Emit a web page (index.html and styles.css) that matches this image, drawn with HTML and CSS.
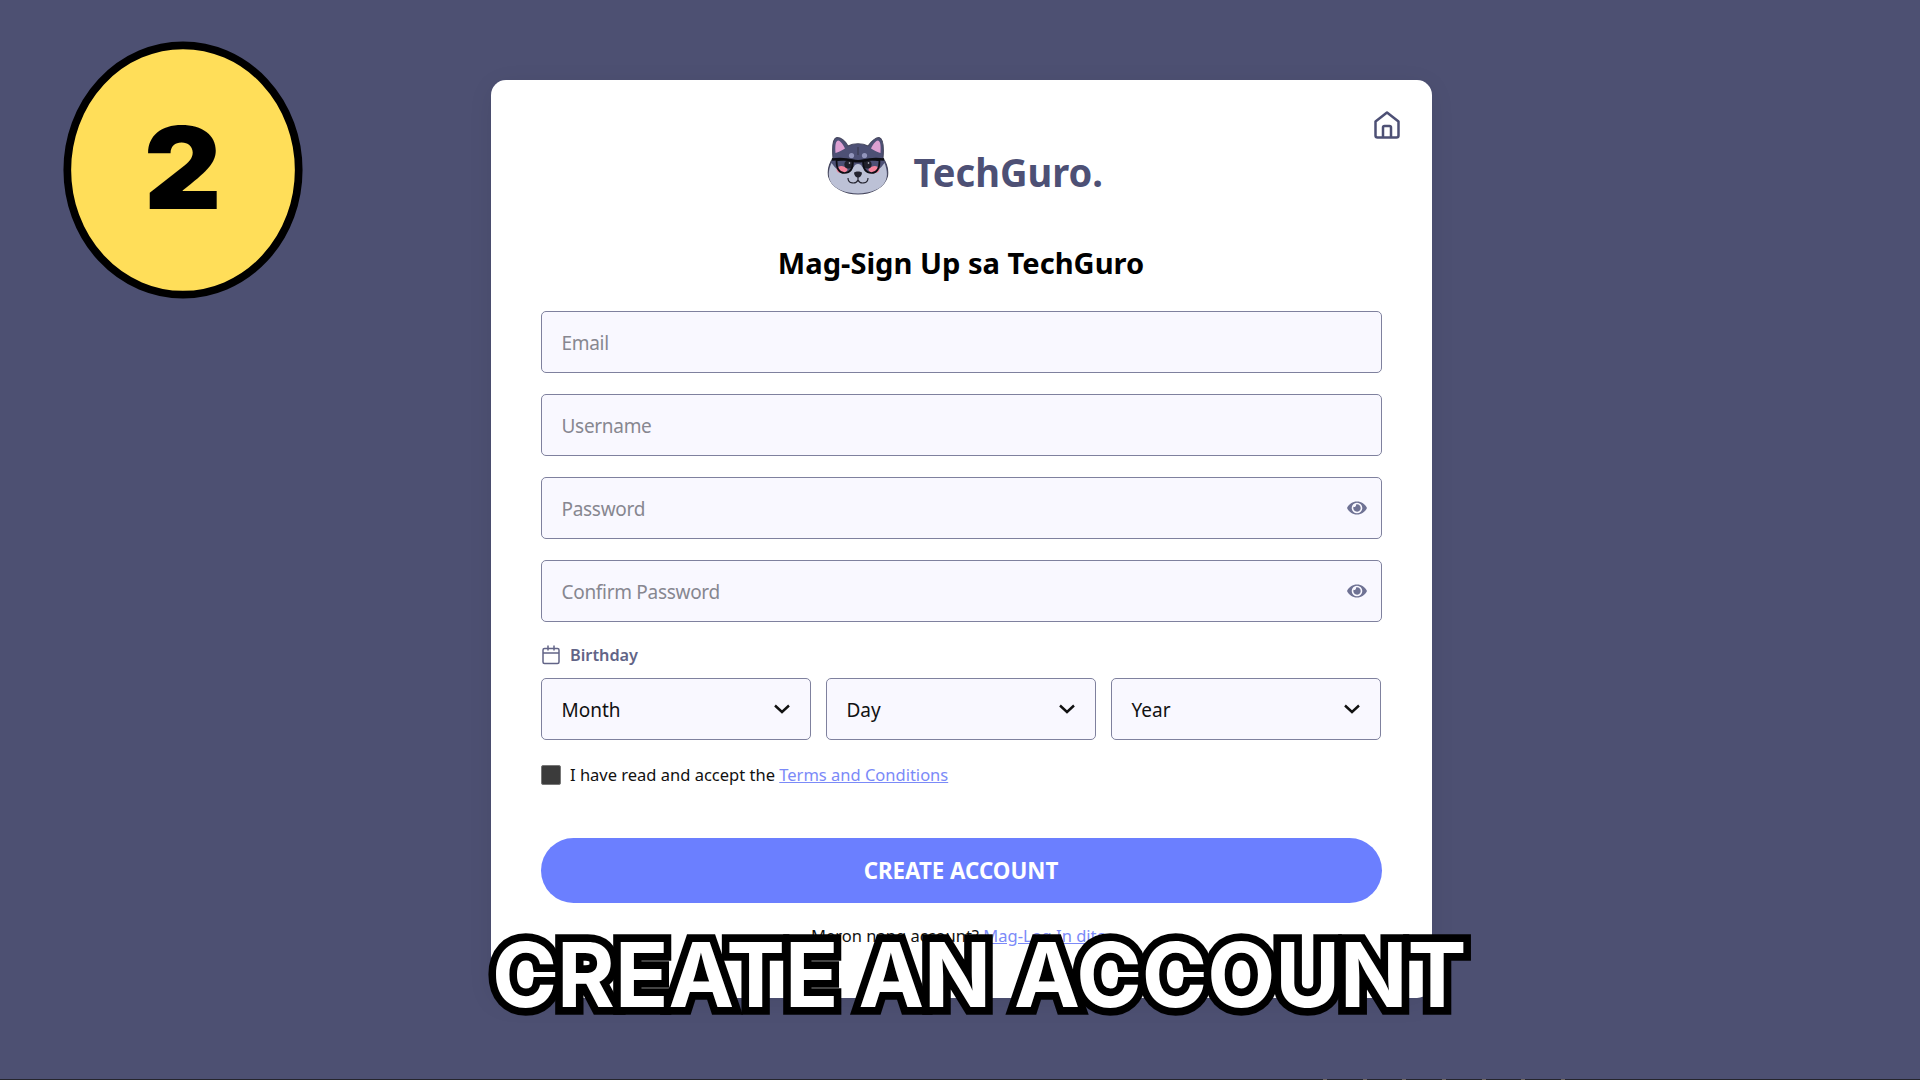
FILE: index.html
```html
<!DOCTYPE html>
<html lang="fil">
<head>
<meta charset="utf-8">
<title>TechGuro</title>
<link rel="stylesheet" href="styles.css">
</head>
<body>
<svg class="defs" width="0" height="0">
  <symbol id="eye" viewBox="0 0 20 14"><path fill-rule="evenodd" d="M0 7C2 3 5.500.5 10 .5S18 3 20 7c-2 4-5.500 6.500-10 6.500S2 11 0 7zm4.700 0a5.300 5.300 0 1 0 10.600 0A5.300 5.300 0 0 0 4.700 7zM10 3.300a3.700 3.700 0 1 1-3.500 2.500 1.900 1.900 0 0 0 2.500-2.300z"/></symbol>
  <symbol id="chevron" viewBox="0 0 18 12"><path d="M2 2.500 9 9l7-6.500"/></symbol>
</svg>

<main class="card">
  <a class="home" aria-label="Home">
    <svg viewBox="0 0 28 30"><path d="M2.500 11.500 14 2.500l11.500 9v14a2 2 0 0 1-2 2h-19a2 2 0 0 1-2-2zM10 27V17.500a1.500 1.500 0 0 1 1.500-1.500h5a1.500 1.500 0 0 1 1.500 1.500V27"/></svg>
  </a>
  <header class="brand">
    <svg class="mascot" viewBox="0 0 62 60">
      <path d="M6 22C5 10 6 2 10 1.500c5 0 9 5 11 8.500 6-3 14-3 20 0 3-4 7-8.500 11-8.500 4 1 5 9 4 20.500 4 6 5.500 11 4.500 18-3 12-17 18-29.500 18S4.500 52 1.500 40C.5 33 2 28 6 22z" fill="#4d5075" stroke="#45465c" stroke-width="1.100"/>
      <path d="M8.500 17C8 10 8.500 5 11 4.500c3 .5 5.500 5 7 8-3.500 2-6.500 3.500-9.500 4.500zM53.500 17c.5-7 0-12-2.500-12.500-3 .5-5.500 5-7 8 3.500 2 6.500 3.500 9.500 4.500z" fill="#dda0d2"/>
      <path d="M4.500 27c4 5 6 8 12 9 6 0 9-3 11.500-7 2-1.500 4-1.500 6 0 2.500 4 5.500 7 11.500 7 6-1 8-4 12-9 6 15 2 29-26.500 30.500C2 56-2 41 4.500 27z" fill="#bcc1d6"/>
      <path d="M31 11v8" stroke="#343449"/>
      <circle cx="24.500" cy="19.500" r="2.600" fill="#9295bc"/><circle cx="37.500" cy="19.500" r="2.600" fill="#9295bc"/>
      <path d="M9.500 33c2-4 7-4 11 0 0 3-3 4-6 4s-5-1-5-4zM41.500 33c4-4 9-4 11 0 0 3-2 4-5 4s-6-1-6-4z" fill="#f3839c"/>
      <circle cx="21.500" cy="28.500" r="4.100" fill="#20202b"/><circle cx="40.500" cy="28.500" r="4.100" fill="#20202b"/>
      <circle cx="22.500" cy="27" r=".8" fill="#d5d5df"/><circle cx="41.500" cy="27" r=".8" fill="#d5d5df"/>
      <g fill="none" stroke="#0d0d13" stroke-linejoin="round">
        <path d="M9.500 24.500c5-1 12-.8 16.500.8 0 6-2 11.700-8.500 11.700s-8-5-8-12.500zM52.500 24.500c-5-1-12-.8-16.500.8 0 6 2 11.700 8.500 11.700s8-5 8-12.500z" stroke-width="1.700"/>
        <path d="M5 23.500c7-.8 14-.7 20.500 1 3.500 1 7.500 1 11 0 6.500-1.700 13.500-1.800 20.500-1" stroke-width="2.600"/>
      </g>
      <path d="M27 36.500c2-1.500 6-1.500 8 0 0 3-2 5-4 5s-4-2-4-5z" fill="#242430"/>
      <path d="M31 41v3m-10-2c0 6 8 6.500 10 2 2 4.500 10 4 10-2" fill="none" stroke="#242430" stroke-width="1.200"/>
    </svg>
    <svg class="brand-name" viewBox="0 0 192 50"><text x="0.500" y="39" textLength="189.500" lengthAdjust="spacingAndGlyphs">TechGuro.</text></svg>
  </header>
  <h1 class="title">Mag-Sign Up sa TechGuro</h1>
  <form class="form">
    <div class="field"><span>Email</span></div>
    <div class="field"><span>Username</span></div>
    <div class="field"><span>Password</span><svg class="eye"><use href="#eye"/></svg></div>
    <div class="field"><span>Confirm Password</span><svg class="eye"><use href="#eye"/></svg></div>
    <div class="birthday">
      <svg class="calendar" viewBox="0 0 20 20"><path d="M2 8h16M3.500 3.500h13A1.500 1.500 0 0 1 18 5v12a1.500 1.500 0 0 1-1.500 1.500h-13A1.500 1.500 0 0 1 2 17V5a1.500 1.500 0 0 1 1.500-1.500zM7 .5v5M13 .5v5"/></svg>
      <span>Birthday</span>
    </div>
    <div class="dates">
      <div class="select"><span>Month</span><svg class="chevron"><use href="#chevron"/></svg></div>
      <div class="select"><span>Day</span><svg class="chevron"><use href="#chevron"/></svg></div>
      <div class="select"><span>Year</span><svg class="chevron"><use href="#chevron"/></svg></div>
    </div>
    <div class="terms"><i class="checkbox"></i><span>I have read and accept the <a class="link">Terms and Conditions</a></span></div>
    <div class="submit"><span>CREATE ACCOUNT</span></div>
  </form>
  <p class="login"><span>Meron nang account? <a class="link">Mag-Log In dito.</a></span></p>
</main>

<div class="step">
  <svg viewBox="0 0 240 258"><ellipse cx="120" cy="129" rx="115.700" ry="124.700"/><text x="81" y="168" textLength="77.500" lengthAdjust="spacingAndGlyphs">2</text></svg>
</div>
<div class="caption">
  <svg viewBox="0 0 1000 100">
    <text x="12" y="77" textLength="346.500" lengthAdjust="spacingAndGlyphs">CREATE</text>
    <text x="378.500" y="77" textLength="132.500" lengthAdjust="spacingAndGlyphs">AN</text>
    <text x="534" y="77" textLength="452.500" lengthAdjust="spacingAndGlyphs">ACCOUNT</text>
  </svg>
</div>
<div class="edge"><i></i><i></i><i></i><i></i><i></i><i></i><i></i></div>
</body>
</html>
```
FILE: styles.css
```css
* { box-sizing: border-box; }
body {
  margin: 0;
  width: 1920px;
  height: 1080px;
  overflow: hidden;
  position: relative;
  background: #4d5072;
  font-family: "Noto Sans", "Open Sans", sans-serif;
  color: #111;
}
.defs { position: absolute; }
.card {
  position: relative;
  width: 941px;
  height: 918px;
  margin: 80.400px 0 0 490.500px;
  padding: 49.600px 50px 0;
  background: #fff;
  border-radius: 15px;
  box-shadow: 0 5px 26px rgba(0, 0, 0, 0.07);
  display: flex;
  flex-direction: column;
}
.home { position: absolute; top: 29.600px; right: 30.500px; width: 28px; height: 30px; }
.home svg { width: 100%; height: 100%; fill: none; stroke: #4d5075; stroke-width: 2.500; stroke-linejoin: round; }
.brand { display: flex; justify-content: center; align-items: flex-start; gap: 24px; height: 108px; padding: 6px 0 0 10px; }
.mascot { width: 62px; height: 60px; }
.brand-name { width: 192px; height: 50px; margin-top: 12px; fill: #4d5075; font-size: 40px; font-weight: 700; overflow: visible; }
.title { margin: 0; height: 73px; line-height: 50px; font-size: 29.100px; font-weight: 700; text-align: center; color: #000; white-space: nowrap; }
.form { display: flex; flex-direction: column; }
.field, .select {
  height: 62.500px;
  border: 1.500px solid #7f819e;
  border-radius: 5px;
  background: #f9f8ff;
  padding: 0 15px 0 20px;
  display: flex;
  align-items: center;
  justify-content: space-between;
  font-size: 19px;
}
.field span, .select span { padding-top: 2px; }
.field { margin-bottom: 20.400px; color: #878790; letter-spacing: -0.300px; }
.eye { width: 20px; height: 14px; margin-right: -1px; fill: #6f7294; }
.birthday { display: flex; align-items: center; gap: 9.500px; height: 26px; margin-bottom: 10px; margin-top: -1px; font-size: 16.300px; font-weight: 600; color: #626487; }
.calendar { width: 20px; height: 20px; fill: none; stroke: #626487; stroke-width: 1.500; }
.dates { display: grid; grid-template-columns: repeat(3, 270px); gap: 15px; }
.select { padding-right: 19px; color: #111; }
.chevron { width: 18px; height: 12px; fill: none; stroke: #111; stroke-width: 2.400; }
.terms { display: flex; align-items: center; gap: 9.500px; height: 30px; margin-top: 20px; font-size: 16.500px; white-space: nowrap; }
.terms span { margin-top: -2px; }
.checkbox { width: 20px; height: 20px; background: #3b3b3b; border: 1px solid #777; border-radius: 2px; }
.link { color: #7b8af8; text-decoration: underline; }
.submit { height: 65px; margin-top: 48px; border-radius: 33px; background: #6b7fff; color: #fff; display: flex; align-items: center; justify-content: center; font-size: 22.300px; font-weight: 700; }
.login { margin: 20px 0 0; line-height: 26px; font-size: 16.500px; text-align: center; white-space: nowrap; }
.step { position: absolute; left: 63px; top: 41px; width: 240px; height: 258px; }
.step svg { width: 100%; height: 100%; }
.step ellipse { fill: #ffde59; stroke: #000; stroke-width: 7.700; }
.step text { font: 900 114px Inter, sans-serif; fill: #000; }
.caption { position: absolute; left: 480px; top: 930px; width: 1000px; height: 100px; }
.caption svg { width: 1000px; height: 100px; overflow: visible; }
.caption text { font: 700 89.500px Inter, sans-serif; fill: #fff; stroke: #000; stroke-width: 15.500; paint-order: stroke; stroke-linejoin: miter; }
.edge { position: absolute; left: 0; bottom: 0; width: 1920px; height: 1px; padding: 0 355px 0 1323px; background: #25252d; display: flex; justify-content: space-between; }
.edge i { width: 4px; height: 1px; background: #6b625f; }
```
